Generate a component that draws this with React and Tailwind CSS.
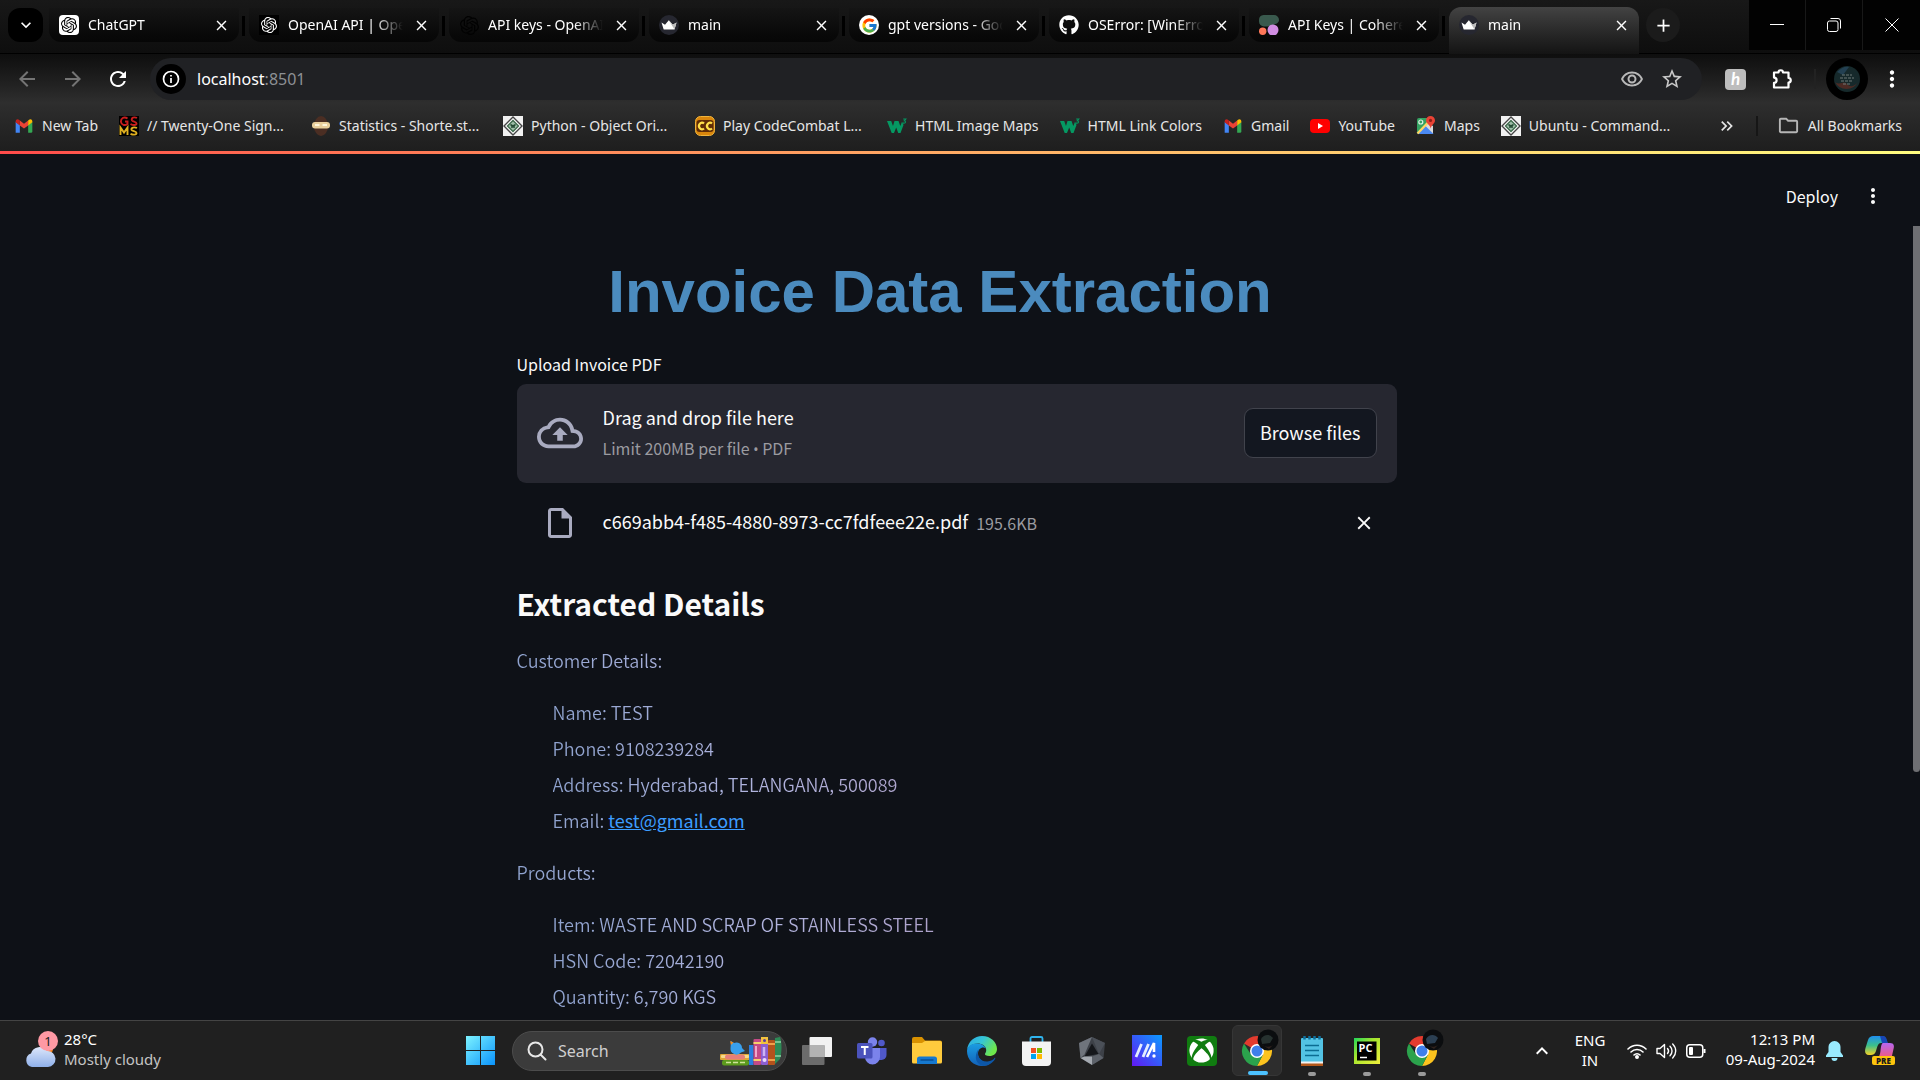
import React from 'react';
import { SiOpenai } from 'react-icons/si';
import { FaGithub, FaXbox } from 'react-icons/fa';
import { FcGoogle } from 'react-icons/fc';
import {
  MdOutlineCloudUpload,
  MdOutlineInsertDriveFile,
  MdStarBorder,
  MdOutlineFolder,
  MdMoreVert,
  MdClose,
  MdAdd,
  MdArrowBack,
  MdArrowForward,
  MdRefresh,
  MdKeyboardArrowDown,
  MdKeyboardArrowUp,
  MdKeyboardDoubleArrowRight,
  MdOutlineRemoveRedEye,
} from 'react-icons/md';

/* ---------- favicons ---------- */

const ChatGptIcon = () => (
  <span className="flex size-5 items-center justify-center rounded-sm bg-white text-black">
    <SiOpenai size={16} />
  </span>
);
const OpenAiDark = () => (
  <span className="flex size-5 items-center justify-center bg-black text-white">
    <SiOpenai size={16} />
  </span>
);
const OpenAiDim = () => (
  <span className="flex size-5 items-center justify-center text-[#020202]">
    <SiOpenai size={19} />
  </span>
);
const CrownIcon = () => (
  <svg viewBox="0 0 20 20" className="size-5">
    <circle cx="10" cy="10" r="10" fill="#262730" />
    <path d="M2.5 7.5 6 9.8 9.8 5.2 13.8 9.8 17.5 7.5 15.5 14.5H4.7Z" fill="#fff" />
    <path d="M9.8 5.2 13.8 9.8 17.5 7.5 15.5 14.5Z" fill="#bbb" />
  </svg>
);
const GoogleIcon = () => (
  <span className="flex size-5 items-center justify-center rounded-full bg-white">
    <FcGoogle size={17} />
  </span>
);
const GithubIcon = () => <FaGithub size={20} className="text-white" />;
const CohereIcon = () => (
  <svg viewBox="0 0 20 20" className="size-5">
    <path d="M4.500 0H15a5 5 0 0 1 5 5c0 3-3 3.800-5.500 4.800-2.500 1-4.500 1.700-8 1.700H5a5 5 0 0 1-5-5V5a5 5 0 0 1 4.500-5Z" fill="#39594d" />
    <circle cx="3.700" cy="16.200" r="3.700" fill="#ff7759" />
    <circle cx="14" cy="15" r="5.500" fill="#d18ee2" />
  </svg>
);

const GmailIcon = () => (
  <svg viewBox="0 0 24 24" className="size-5">
    <path d="M2 20V7l5 3.700V20H3.500A1.500 1.500 0 0 1 2 20Z" fill="#4285f4" />
    <path d="M17 20v-9.300L22 7v11.500a1.500 1.500 0 0 1-1.500 1.500Z" fill="#34a853" />
    <path d="M17 5.500 12 9.300 7 5.500v5.800l5 3.800 5-3.800Z" fill="#ea4335" />
    <path d="M2 6.500C2 4 4.700 3 6.300 4.900L7 5.500v5.800L2 7.500Z" fill="#c5221f" />
    <path d="M22 6.500C22 4 19.300 3 17.700 4.900L17 5.500v5.800l5-3.800Z" fill="#fbbc04" />
  </svg>
);
const MonogramIcon = () => (
  <svg viewBox="0 0 20 20" className="size-5">
    <rect width="20" height="20" fill="#000" />
    <path d="M8.500 2.500C5 0 1.500 2.500 2 6c.3 3 4 4 6.500 2V5.500H6M18 2c-3-1.500-6 0-5 2.300.7 1.500 4.500 1.200 4.500 3.200 0 2-3.500 2-6 .5" fill="none" stroke="#c81e1e" strokeWidth="1.900" />
    <path d="M1.500 19v-7.500l3.500 5 3.500-5V19M18 12c-3-1.300-6-.2-5.500 1.800.7 1.500 5 1.200 5 3.200 0 2-3.500 2-6 .8" fill="none" stroke="#e0b020" strokeWidth="1.900" />
  </svg>
);
const ShorteIcon = () => (
  <svg viewBox="0 0 20 20" className="size-5">
    <ellipse cx="10" cy="10" rx="7" ry="10" fill="#4b2e23" />
    <rect x="1" y="6" width="18" height="6.500" rx="3" fill="#e9cf9c" />
    <path d="M4 9h4.500M11.500 9H16" stroke="#fff6dc" strokeWidth="2" />
  </svg>
);
const DiamondIcon = () => (
  <svg viewBox="0 0 20 20" className="size-5">
    <rect width="20" height="20" fill="#f1f1f1" />
    <path d="M10 1 19 10 10 19 1 10Z" fill="#fff" stroke="#444" strokeWidth="1.400" />
    <path d="M10 4.500 15.500 10 10 15.500 4.500 10Z" fill="#9fbfa9" stroke="#3e6b4d" strokeWidth="1.400" />
    <path d="M7.500 8.500c1 1.500 4 1.500 5 0M8 11h4" stroke="#234a33" strokeWidth="1.400" fill="none" />
  </svg>
);
const CodeCombatIcon = () => (
  <svg viewBox="0 0 20 20" className="size-5">
    <rect x=".5" y=".5" width="19" height="19" rx="5" fill="#d9860c" stroke="#f0b43c" />
    <rect x="1.500" y="4" width="17" height="12" rx="3" fill="#5f2c07" />
    <path d="M9 7.500a3 3.300 0 1 0 0 5M17 7.500a3 3.300 0 1 0 0 5" fill="none" stroke="#ffe04a" strokeWidth="2.200" />
  </svg>
);
const W3Icon = () => (
  <svg viewBox="0 0 20 20" className="size-5">
    <path d="M0 5h4.200l1.800 5 1.500-5h4l1.800 5 1.700-4.200L16.500 9 13.500 17h-2.300L9.200 11.500 7 17H4.700Z" fill="#059862" />
    <path d="M16.200 3h2.600l-1.500 1.800c1.500 0 1.900 2.400-.4 2.400-.6 0-1-.3-1.200-.6" fill="none" stroke="#059862" strokeWidth="1.100" />
  </svg>
);
const YouTubeIcon = () => (
  <svg viewBox="0 0 20 20" className="size-5">
    <rect y="3" width="20" height="14" rx="4" fill="#f00" />
    <path d="M8 7v6l5-3Z" fill="#fff" />
  </svg>
);
const MapsIcon = () => (
  <svg viewBox="0 0 20 20" className="size-5">
    <path d="M1 4a2 2 0 0 1 2-2h12v16H3a2 2 0 0 1-2-2Z" fill="#34a261" />
    <path d="M1.500 17.500 9.500 9l8 8.500a2 2 0 0 1-1 .5H3a2 2 0 0 1-1.500-.5Z" fill="#4a89f3" />
    <path d="M12 7l5 3v7.500L9.500 10Z" fill="#dadbdd" />
    <path d="M1.500 17.500 12.500 6" stroke="#fdd663" strokeWidth="2.400" />
    <circle cx="4.800" cy="6" r="2" fill="none" stroke="#dff2e5" strokeWidth="1.200" />
    <path d="M14.500 0a4.500 4.500 0 0 1 4.500 4.500c0 3-3.600 4-4.300 8-.6-4-4.700-5-4.700-8A4.500 4.500 0 0 1 14.500 0Z" fill="#ea4335" />
    <circle cx="14.500" cy="4.400" r="1.600" fill="#8e1f17" />
  </svg>
);
const ExtensionIcon = () => (
  <svg viewBox="0 0 24 24" className="size-6" fill="none" stroke="#fff" strokeWidth="2.200" strokeLinejoin="round">
    <path d="M4 5.500h4.500a2 2 0 0 1 4.500 0h5.500v5.500a2 2 0 0 1 0 4.500v5H4v-4.700a2.600 2.600 0 0 0 0-5.200Z" />
  </svg>
);

/* ---------- browser chrome ---------- */

const TABS = [
  { title: 'ChatGPT', icon: ChatGptIcon },
  { title: 'OpenAI API | OpenAI', icon: OpenAiDark },
  { title: 'API keys - OpenAI API', icon: OpenAiDim },
  { title: 'main', icon: CrownIcon },
  { title: 'gpt versions - Google Search', icon: GoogleIcon },
  { title: 'OSError: [WinError 126]', icon: GithubIcon },
  { title: 'API Keys | Cohere', icon: CohereIcon },
  { title: 'main', icon: CrownIcon, active: true },
];

const BOOKMARKS = [
  { title: 'New Tab', icon: GmailIcon },
  { title: '// Twenty-One Sign...', icon: MonogramIcon, wide: true },
  { title: 'Statistics - Shorte.st...', icon: ShorteIcon, wide: true },
  { title: 'Python - Object Ori...', icon: DiamondIcon, wide: true },
  { title: 'Play CodeCombat L...', icon: CodeCombatIcon, wide: true },
  { title: 'HTML Image Maps', icon: W3Icon },
  { title: 'HTML Link Colors', icon: W3Icon },
  { title: 'Gmail', icon: GmailIcon },
  { title: 'YouTube', icon: YouTubeIcon },
  { title: 'Maps', icon: MapsIcon },
  { title: 'Ubuntu - Command...', icon: DiamondIcon, wide: true },
];

function Tab({ title, icon: Icon, active }) {
  return (
    <div className="flex w-[200px] min-w-0 shrink items-start pt-2">
      <div
        className={
          active
            ? '-mt-px flex h-[47px] min-w-0 flex-1 items-start rounded-t-xl bg-linear-to-b from-[#434343] to-[#141414] pt-px'
            : 'flex h-[34px] min-w-0 flex-1 items-start rounded-b-xl bg-linear-to-b from-[#151515] to-[#060606]'
        }
      >
        <button className="flex h-[34px] min-w-0 flex-1 items-center gap-[9px] pl-[10px] text-left">
          <span className="shrink-0"><Icon /></span>
          <span className="min-w-0 flex-1 overflow-hidden mask-r-from-75% mask-r-to-100% text-[14px] leading-5 whitespace-nowrap">
            {title}
          </span>
        </button>
        <button aria-label={'Close ' + title} className="mr-2 ml-2 flex h-[34px] w-5 shrink-0 items-center justify-center">
          <MdClose size={17} />
        </button>
      </div>
      <span className={active ? 'w-[10px] shrink-0' : 'mt-2 mr-1 ml-[3px] h-5 w-[3px] shrink-0 bg-black'} />
    </div>
  );
}

function TabStrip() {
  return (
    <div className="flex h-[54px] shrink-0 items-start border-b border-black bg-linear-to-b from-[#181818] to-[#0e0e0e] pl-2">
      <button aria-label="Search tabs" className="mt-2 mr-[6px] flex h-[34px] w-[35px] shrink-0 items-center justify-center rounded-xl bg-black">
        <MdKeyboardArrowDown size={20} />
      </button>
      {TABS.map((t, i) => <Tab key={i} {...t} />)}
      <button aria-label="New tab" className="mt-2 -ml-[3px] flex size-[34px] shrink-0 items-center justify-center rounded-full bg-[#1b1b1b]">
        <MdAdd size={21} />
      </button>
      <div className="ml-auto flex h-[50px] shrink-0 gap-px bg-[#181818]">
        <button aria-label="Minimize" className="flex w-14 items-center justify-center bg-[#020202]">
          <svg viewBox="0 0 14 14" className="size-[14px]"><path d="M0 6.500h14" stroke="#fff" /></svg>
        </button>
        <button aria-label="Restore" className="flex w-14 items-center justify-center bg-[#020202]">
          <svg viewBox="0 0 14 14" className="size-[14px]" fill="none" stroke="#fff">
            <rect x=".5" y="3" width="10.500" height="10.500" rx="2" />
            <path d="M3.500.5H11a2.500 2.500 0 0 1 2.500 2.500v7.500" />
          </svg>
        </button>
        <button aria-label="Close" className="flex w-[57px] items-center justify-center bg-[#020202]">
          <svg viewBox="0 0 14 14" className="size-[14px]"><path d="M.5.5l13 13M13.500.5l-13 13" stroke="#fff" /></svg>
        </button>
      </div>
    </div>
  );
}

function Toolbar() {
  return (
    <div className="flex h-[50px] items-center">
      <nav className="flex w-[150px] items-center justify-between pr-5 pl-[15px]">
        <button aria-label="Back" className="text-[#747474]"><MdArrowBack size={24} /></button>
        <button aria-label="Forward" className="text-[#747474]"><MdArrowForward size={24} /></button>
        <button aria-label="Reload"><MdRefresh size={24} /></button>
      </nav>
      <div className="flex h-[42px] flex-1 items-center rounded-full bg-[#202124] pr-[18px] pl-[6px]">
        <button aria-label="Site information" className="flex size-[30px] items-center justify-center rounded-full bg-black">
          <svg viewBox="0 0 18 18" className="size-[18px]" fill="none" stroke="#fff" strokeWidth="1.700">
            <circle cx="9" cy="9" r="7.500" />
            <path d="M9 8v5M9 5v1.600" />
          </svg>
        </button>
        <p className="flex-1 pl-[11px] text-[16px] leading-6">localhost<span className="text-[#8d9094]">:8501</span></p>
        <button aria-label="Show" className="mr-4 text-[#b9b9b9]"><MdOutlineRemoveRedEye size={24} /></button>
        <button aria-label="Bookmark this tab" className="text-[#c8c8c8]"><MdStarBorder size={24} /></button>
      </div>
      <div className="flex w-[218px] items-center pl-[23px]">
        <button aria-label="Coupons" className="flex h-[21px] w-[21px] items-center justify-center rounded-sm bg-[#bdbdbd] font-['Lato',sans-serif] text-[17px] leading-5 font-bold text-white italic">h</button>
        <button aria-label="Extensions" className="ml-6"><ExtensionIcon /></button>
        <span className="ml-5 h-5 w-[2px] bg-[#222]" />
        <button aria-label="Profile" className="ml-[10px] flex size-[42px] items-center justify-center rounded-full bg-black">
          <svg viewBox="0 0 26 26" className="size-[26px]">
            <circle cx="13" cy="13" r="13" fill="#16292b" />
            <path d="M1 16c5 4 8-2 12 2s8 2 11-2a13 13 0 0 1-23 0Z" fill="#4c2a24" />
            <path d="M3 6c4-4 8-6 12-5l-6 8Z" fill="#234052" />
            <path d="M8 9h10M6 12h14M7 15h12M9 18h8" stroke="#6f7a78" strokeWidth="1" strokeDasharray="3 1" />
          </svg>
        </button>
        <button aria-label="Menu" className="ml-[11px]"><MdMoreVert size={26} /></button>
      </div>
    </div>
  );
}

function BookmarkBar() {
  return (
    <div className="flex h-[47px] items-center pr-[18px] pb-1 pl-[14px] text-[14px] leading-5 text-[#e6e6e6]">
      {BOOKMARKS.map(({ title, icon: Icon, wide }, i) => (
        <a key={i} href="#" className={(wide ? 'w-48 ' : '') + 'flex shrink-0 items-center gap-2 pr-[21px] whitespace-nowrap'}>
          <Icon />
          {title}
        </a>
      ))}
      <button aria-label="More bookmarks" className="ml-auto"><MdKeyboardDoubleArrowRight size={20} /></button>
      <span className="mx-[19px] h-5 w-[2px] bg-[#161616]" />
      <button className="flex items-center gap-2 whitespace-nowrap">
        <MdOutlineFolder size={23} className="text-[#b5b5b5]" />
        All Bookmarks
      </button>
    </div>
  );
}

/* ---------- page ---------- */

const SECTIONS = [
  {
    heading: 'Customer Details:',
    items: [
      ['Name', 'TEST'],
      ['Phone', '9108239284'],
      ['Address', 'Hyderabad, TELANGANA, 500089'],
      ['Email', 'test@gmail.com', 'mailto:test@gmail.com'],
    ],
  },
  {
    heading: 'Products:',
    items: [
      ['Item', 'WASTE AND SCRAP OF STAINLESS STEEL'],
      ['HSN Code', '72042190'],
      ['Quantity', '6,790 KGS'],
    ],
  },
];

function Tinted({ children }) {
  return (
    <span className="bg-linear-to-r from-[#8fa3cf] via-[#b0b4de] to-[#ada0c8] bg-[length:400px_100%] bg-clip-text text-transparent">
      {children}
    </span>
  );
}

function InvoicePage() {
  return (
    <main className="flex min-h-0 flex-1 overflow-hidden bg-[#0e1117] font-['Noto_Sans_CJK_SC',sans-serif] text-[#fafafa]">
      <div className="min-w-0 flex-1">
        <header className="flex h-[67px] items-center justify-end pt-4 pr-[28px] text-[16px] leading-6">
          <button>Deploy</button>
          <button aria-label="Main menu" className="ml-[23px]"><MdMoreVert size={24} /></button>
        </header>
        <div className="mx-auto w-full max-w-[880px]">
          <h1 className="pt-[35px] pr-[33px] text-center font-['Liberation_Sans',sans-serif] text-[60px] leading-[72px] font-bold text-[#4b8bbe]">
            Invoice Data Extraction
          </h1>
          <label htmlFor="pdf" className="mt-6 block text-[16px] leading-6">Upload Invoice PDF</label>
          <section className="mt-2 flex h-[99px] items-center rounded-[9px] bg-[#262730] px-5 pb-px">
            <MdOutlineCloudUpload size={46} className="text-[#a9abc0]" />
            <div className="ml-5 flex-1">
              <p className="text-[18px] leading-7">Drag and drop file here</p>
              <p className="mt-[3px] text-[16px] leading-7 text-[#9b9ba0]">
                Limit 200MB per file <span className="font-['Noto_Sans',sans-serif] text-[14px]">•</span> PDF
              </p>
            </div>
            <button id="pdf" className="h-[50px] rounded-[9px] border border-[#41434c] bg-[#131720] px-[15px] pb-[2px] text-[18px] leading-7">Browse files</button>
          </section>
          <div className="flex items-center px-5 pt-[22px]">
            <span className="flex w-[46px] justify-center"><MdOutlineInsertDriveFile size={36} className="text-[#a9abc0]" /></span>
            <p className="ml-5 pb-1 text-[18px] leading-8">c669abb4-f485-4880-8973-cc7fdfeee22e.pdf</p>
            <small className="ml-2 pb-px text-[16px] leading-8 text-[#9b9ba0]">195.6KB</small>
            <button aria-label="Remove file" className="mr-[2px] ml-auto"><MdClose size={22} /></button>
          </div>
          <h2 className="mt-11 text-[30px] leading-9 font-bold">Extracted Details</h2>
          <div className="mt-[25px] flex flex-col gap-[23px] text-[18px] leading-[29px] font-[350]">
            {SECTIONS.map((s) => (
              <section key={s.heading}>
                <h3><Tinted>{s.heading}</Tinted></h3>
                <ul className="mt-[23px] flex flex-col gap-[7px] pl-9">
                  {s.items.map(([key, value, href]) => (
                    <li key={key}>
                      <Tinted>{key}: {href ? null : value}</Tinted>
                      {href && <a href={href} className="font-normal text-[#3d9dff] underline">{value}</a>}
                    </li>
                  ))}
                </ul>
              </section>
            ))}
          </div>
        </div>
      </div>
      <div className="w-[7px] shrink-0 pt-[72px]">
        <div className="h-[546px] rounded-b-sm bg-[#6e6f73]" />
      </div>
    </main>
  );
}

/* ---------- taskbar ---------- */

const WindowsIcon = () => (
  <svg viewBox="0 0 29 29" className="size-[29px]">
    <defs><linearGradient id="win" x1="0" y1="0" x2="1" y2="1"><stop offset="0" stopColor="#7df3ff" /><stop offset="1" stopColor="#0a93fb" /></linearGradient></defs>
    <path d="M0 0h14v14H0ZM15 0h14v14H15ZM0 15h14v14H0ZM15 15h14v14H15Z" fill="url(#win)" />
  </svg>
);
const BooksArt = () => (
  <svg viewBox="0 0 62 30" className="h-[30px] w-[62px]">
    <rect x="0" y="18" width="30" height="6" rx="1" fill="#e0a636" />
    <rect x="1" y="19" width="28" height="3" rx="1" fill="#f7d98a" />
    <rect x="5" y="18.500" width="20" height="5" rx="2.500" fill="#e77f7a" />
    <rect x="2" y="24" width="27" height="5.500" rx="2" fill="#5c9a1d" />
    <path d="M6 26.500h20" stroke="#cfe39a" strokeWidth="1.500" strokeDasharray="5 2" />
    <path d="M11 5l3 2a5.500 5.500 0 0 1 8 5l3 3-4 1.500a6 6 0 0 1-10.500-4.500Z" fill="#3aa0ee" />
    <path d="M10 5l3.500 1.500L11 9Z" fill="#f08a24" />
    <rect x="29" y="9" width="4.500" height="20" fill="#2b7de0" />
    <rect x="33.500" y="3" width="7.500" height="26" rx="1" fill="#c44a86" />
    <path d="M33.500 7h7.500M33.500 24h7.500" stroke="#f5d06a" strokeWidth="2" />
    <path d="M36 10v11" stroke="#f0a8cb" strokeWidth="2" />
    <rect x="41" y="1" width="7" height="28" rx="1" fill="#8b5fd0" />
    <rect x="41" y="1" width="7" height="7" fill="#f2c23e" />
    <circle cx="44.500" cy="4.500" r="1.500" fill="#5d3b9c" /><path d="M44 11v9" stroke="#cdb4f5" strokeWidth="2.500" /><circle cx="44.500" cy="24" r="2" fill="#e9d9ff" />
    <rect x="48" y="4" width="7" height="25" rx="1" fill="#b4531c" />
    <path d="M48 8h7M48 24h7" stroke="#f0a04a" strokeWidth="2" />
    <path d="M55 2l5-1c2 6 2 14 0 22l-5 5Z" fill="#2d8a56" />
    <path d="M55 6h6M55 20h6" stroke="#8fd3a4" strokeWidth="1.500" />
  </svg>
);
const TaskViewIcon = () => (
  <svg viewBox="0 0 30 28" className="h-7 w-[30px]">
    <rect x="7.500" y="0" width="22.500" height="20" rx="1" fill="#f2f2f2" />
    <rect x="0" y="8" width="22.500" height="20" rx="1" fill="#6c6c6c" />
    <path d="M7.500 8h15v12h-15Z" fill="#b3b3b3" />
  </svg>
);
const TeamsIcon = () => (
  <svg viewBox="0 0 30 28" className="h-7 w-[30px]">
    <circle cx="24.500" cy="6" r="3.300" fill="#5059c9" />
    <path d="M20 11h9.500v7a5 5 0 0 1-5 5H21Z" fill="#5059c9" />
    <circle cx="15.500" cy="5" r="4.700" fill="#7b83eb" />
    <path d="M8 11h15v9a7.500 7.500 0 0 1-15 0Z" fill="#7b83eb" />
    <rect x="0" y="6" width="15.500" height="15.500" rx="1.500" fill="#4b53bc" />
    <path d="M4 10h7.500M7.750 10v8" stroke="#fff" strokeWidth="2" />
  </svg>
);
const FolderIcon = () => (
  <svg viewBox="0 0 30 27" className="h-[27px] w-[30px]">
    <path d="M0 2a2 2 0 0 1 2-2h8l3 3.500h15a2 2 0 0 1 2 2V10H0Z" fill="#d99100" />
    <path d="M0 6h10l3-2h15a2 2 0 0 1 2 2v19a1.500 1.500 0 0 1-1.500 1.500h-27A1.500 1.500 0 0 1 0 25Z" fill="#ffcb3d" />
    <path d="M5 27v-5a2.500 2.500 0 0 1 2.500-2.500h15A2.500 2.500 0 0 1 25 22v5Z" fill="#1679d0" />
    <path d="M8.500 23h13" stroke="#0a4f94" strokeWidth="1.500" />
  </svg>
);
const EdgeIcon = () => (
  <svg viewBox="0 0 30 30" className="size-[30px]">
    <defs>
      <linearGradient id="eg1" x1="0" y1="0" x2="1" y2=".5"><stop offset="0" stopColor="#2aa8e6" /><stop offset=".5" stopColor="#35c5d6" /><stop offset="1" stopColor="#6fe84b" /></linearGradient>
      <linearGradient id="eg2" x1="0" y1="0" x2="0" y2="1"><stop offset="0" stopColor="#1b9de2" /><stop offset="1" stopColor="#1261b8" /></linearGradient>
    </defs>
    <path d="M0 14C1 5.500 7.500 0 15 0c9 0 15 6.500 15 13 0 4.500-3.500 7-7.500 7-3.500 0-5-1.300-4.500-2.300.7-1 1.200-2 1.200-3.700C19.200 10 15 7.500 10.500 7.500 5 7.500 1 11 0 14Z" fill="url(#eg1)" />
    <path d="M0 15c0-5 5-8 10.500-7.500 4.500.3 7.500 2.500 8.500 5-3-2.500-8 0-8 5 0 6 6 10.500 13 9-2.500 2.500-5.500 3.500-9 3.500C6.500 30 0 23.500 0 15Z" fill="url(#eg2)" />
    <path d="M11.500 13c-2.500 6 1.500 13 9 12.500 3.500-.2 6-2 7-3.500.8-.5 1 .2.7.8C25.500 27.500 21 30 16.500 30 9.500 29 6 21 11.500 13Z" fill="#0d57a8" />
  </svg>
);
const StoreIcon = () => (
  <svg viewBox="0 0 29 30" className="h-[30px] w-[29px]">
    <path d="M8.500 6V2.500A1.500 1.500 0 0 1 10 1h9a1.500 1.500 0 0 1 1.500 1.500V6" fill="none" stroke="#2fb4ee" strokeWidth="1.800" />
    <path d="M0 5.500h29V26a4 4 0 0 1-4 4H4a4 4 0 0 1-4-4Z" fill="#f3f3f3" />
    <path d="M9 12h5v5H9Z" fill="#f25022" /><path d="M15 12h5v5h-5Z" fill="#7fba00" />
    <path d="M9 18h5v5H9Z" fill="#00a4ef" /><path d="M15 18h5v5h-5Z" fill="#ffb900" />
  </svg>
);
const ArmouryIcon = () => (
  <svg viewBox="0 0 26 28" className="h-7 w-[26px]">
    <path d="M13 0 26 6 24.500 21 13 28 1.500 21 0 6Z" fill="#3d4148" />
    <path d="M13 0 0 6 1.500 21 5.500 17.500Z" fill="#6f747c" />
    <path d="M13 0 26 6 20 17Z" fill="#4b5058" />
    <path d="M13 6.500 19.500 17 5.500 19.500Z" fill="#15171b" />
    <path d="M1.500 21 5.500 19.500 13 19.500V28Z" fill="#a4a9b0" />
    <path d="M13 19.500 20 17 24.500 21 13 28Z" fill="#5d626a" />
  </svg>
);
const MyAsusIcon = () => (
  <svg viewBox="0 0 30 31" className="h-[31px] w-[30px]">
    <defs><linearGradient id="asus" x1="0" y1="1" x2="1" y2="0"><stop offset="0" stopColor="#6218f2" /><stop offset="1" stopColor="#0a9bff" /></linearGradient></defs>
    <path d="M0 0h30v31H0Z" fill="url(#asus)" />
    <path d="M4 22 9.500 9M11 22 16.500 9" stroke="#e3ecff" strokeWidth="2.800" />
    <path d="M15 22 22 8v9" stroke="#fff" strokeWidth="2.600" fill="none" />
    <circle cx="22" cy="21" r="1.700" fill="#fff" />
  </svg>
);
const XboxIcon = () => (
  <span className="flex size-[30px] items-center justify-center rounded-sm bg-[#107c10]">
    <FaXbox size={25} className="text-white" />
  </span>
);
const ChromeIcon = ({ tint }) => (
  <svg viewBox="0 0 38 38" className="size-[38px]">
    <g transform="translate(1 7)">
      <path d="M15 15 2 7.500A15 15 0 0 1 28 7.500Z" fill="#e33b2e" />
      <path d="M15 8h13.300A15 15 0 0 1 15 30l6-11.500Z" fill="#fcc31e" />
      <path d="M9 18.500 2 7.500A15 15 0 0 0 15 30l6-11.500Z" fill="#2ba24c" />
      <circle cx="15" cy="15" r="7" fill="#fff" />
      <circle cx="15" cy="15" r="5.500" fill="#3f7fea" />
    </g>
    <circle cx="27" cy="11" r="10.500" fill="#0b0d0f" />
    <path d="M20 10c3-5 9-5 12-1l-3 5-8 1Z" fill={tint} />
    <path d="M20 15c3 3 8 4 12 1l-4 4Z" fill="#30221c" />
  </svg>
);
const NotepadIcon = () => (
  <svg viewBox="0 0 22 30" className="h-[30px] w-[22px]">
    <rect x="0" y="25" width="22" height="5" fill="#b3581b" />
    <rect x="0" y="2" width="22" height="25" rx="1" fill="#53c3e4" />
    <path d="M0 26.500h22" stroke="#f3f3f3" strokeWidth="2" />
    <path d="M3.500 0v3.500M8.500 0v3.500M13.500 0v3.500M18.500 0v3.500" stroke="#0d6f9c" strokeWidth="2.500" />
    <path d="M4 9.500h14M4 14.500h14M4 19.500h14" stroke="#0b6c92" strokeWidth="1.600" />
  </svg>
);
const PyCharmIcon = () => (
  <svg viewBox="0 0 26 26" className="size-[26px]">
    <defs><linearGradient id="pyc" x1="0" y1="0" x2="1" y2="1"><stop offset="0" stopColor="#21d75a" /><stop offset=".4" stopColor="#a5e52e" /><stop offset="1" stopColor="#f2f03c" /></linearGradient></defs>
    <rect width="26" height="26" fill="url(#pyc)" />
    <rect x="3" y="3.500" width="19.500" height="19" fill="#000" />
    <text x="4.500" y="14" fontSize="11" fontWeight="700" fontFamily="Open Sans, sans-serif" fill="#fff">PC</text>
    <path d="M6 19.500h7" stroke="#fff" strokeWidth="1.500" />
  </svg>
);
const CopilotIcon = () => (
  <svg viewBox="0 0 30 29" className="h-[29px] w-[30px]">
    <defs>
      <linearGradient id="cp1" x1="0" y1="0" x2="0" y2="1"><stop offset="0" stopColor="#1f8ff0" /><stop offset=".5" stopColor="#3cc08b" /><stop offset="1" stopColor="#f4d126" /></linearGradient>
      <linearGradient id="cp2" x1="0" y1="0" x2="0" y2="1"><stop offset="0" stopColor="#b667f0" /><stop offset="1" stopColor="#f2597c" /></linearGradient>
    </defs>
    <path d="M8 0h9c3 0 4 2 5 7h-6c-3 0-3.500 3-5 8-1 3-3 4-5 4H4c-4 0-4.500-3-3.500-7L3 4c1-3 3-4 5-4Z" fill="url(#cp1)" />
    <path d="M15 0h3c3 0 3.500 2.500 5 7h-6Z" fill="#1747b5" />
    <path d="M18 7h7c4 0 4.500 3 3.500 6l-2 9H12c2-1 3-3 3.500-7C16 9 17 7 18 7Z" fill="url(#cp2)" />
    <rect x="7" y="20" width="23" height="9" rx="2" fill="#fdc40d" />
    <text x="18.500" y="27.600" textAnchor="middle" fontSize="8" fontWeight="800" fontFamily="Open Sans, sans-serif" fill="#1b1b1b">PRE</text>
  </svg>
);

const APPS = [
  { name: 'Task view', icon: <TaskViewIcon /> },
  { name: 'Teams', icon: <TeamsIcon /> },
  { name: 'File Explorer', icon: <FolderIcon /> },
  { name: 'Edge', icon: <EdgeIcon /> },
  { name: 'Microsoft Store', icon: <StoreIcon /> },
  { name: 'Armoury Crate', icon: <ArmouryIcon /> },
  { name: 'MyASUS', icon: <MyAsusIcon /> },
  { name: 'Xbox', icon: <XboxIcon /> },
  { name: 'Chrome', icon: <ChromeIcon tint="#26312f" />, state: 'active', badge: true },
  { name: 'Notepad', icon: <NotepadIcon />, state: 'open' },
  { name: 'PyCharm', icon: <PyCharmIcon />, state: 'open' },
  { name: 'Chrome profile', icon: <ChromeIcon tint="#2b3f52" />, state: 'open', badge: true },
];

function AppButton({ name, icon, state, badge }) {
  return (
    <button aria-label={name} className="flex w-[55px] justify-center">
      <span
        className={
          'relative flex h-[51px] w-[50px] items-center justify-center rounded-md ' +
          (state === 'active' ? 'border border-[#363636] bg-[#2d2d2d] ' : '') +
          (badge ? 'pb-[6px] pl-[6px]' : '')
        }
      >
        {icon}
        {state === 'active' && <span className="absolute bottom-0 left-[15px] h-1 w-5 rounded-full bg-[#4cc2ff]" />}
        {state === 'open' && <span className="absolute bottom-0 left-[21px] h-1 w-2 rounded-full bg-[#9a9a9a]" />}
      </span>
    </button>
  );
}

function Taskbar() {
  return (
    <footer className="grid h-[60px] shrink-0 grid-cols-[1fr_auto_1fr] items-center border-t border-[#444] bg-[#202020] text-[15px] leading-5">
      <button className="flex items-center gap-[6px] pb-1 pl-6 text-left">
        <svg viewBox="0 0 34 36" className="h-9 w-[34px]">
          <defs><linearGradient id="cl" x1="0" y1="0" x2="0" y2="1"><stop offset="0" stopColor="#dce6fa" /><stop offset="1" stopColor="#8fb0ea" /></linearGradient></defs>
          <circle cx="23" cy="18" r="6" fill="#f2841f" />
          <path d="M8 36a7 7 0 0 1-1-13.500A9 9 0 0 1 23 20a8 8 0 0 1 1 16Z" fill="url(#cl)" />
          <circle cx="24" cy="10" r="10" fill="#ff99a4" />
          <text x="24" y="15" textAnchor="middle" fontSize="13" fontFamily="Noto Sans, sans-serif" fill="#1b1b1b">1</text>
        </svg>
        <span className="flex flex-col">
          <span>28°C</span>
          <span className="text-[#c4c4c4]">Mostly cloudy</span>
        </span>
      </button>
      <div className="mr-4 flex items-center">
        <button aria-label="Start" className="flex w-[55px] justify-center pr-1"><WindowsIcon /></button>
        <label className="mx-[2px] flex h-10 w-[275px] items-center rounded-full border border-[#4c4c4c] bg-[#3b3b3b] pr-1 pl-[14px]">
          <svg viewBox="0 0 20 20" className="size-5 shrink-0" fill="none" stroke="#e8e8e8" strokeWidth="2">
            <circle cx="8.500" cy="8.500" r="7" /><path d="M13.500 13.500 18.500 18.500" strokeLinecap="round" />
          </svg>
          <input type="text" aria-label="Search" placeholder="Search" className="ml-[11px] w-0 min-w-0 flex-1 bg-transparent text-[16px] leading-6 outline-none placeholder:text-[#cfcfcf]" />
          <BooksArt />
        </label>
        {APPS.map((a) => <AppButton key={a.name} {...a} />)}
      </div>
      <div className="flex items-center justify-end pr-[25px]">
        <button aria-label="Show hidden icons"><MdKeyboardArrowUp size={24} /></button>
        <button className="ml-[18px] w-[36px] pb-[2px] text-center">ENG<br />IN</button>
        <button aria-label="Network, sound, battery" className="ml-[19px] flex items-center gap-[9px]">
          <svg viewBox="0 0 20 16" className="h-4 w-5" fill="none" stroke="#fff" strokeWidth="1.600" strokeLinecap="round">
            <path d="M1 6a12.700 12.700 0 0 1 18 0M4 9a8.500 8.500 0 0 1 12 0M7 12a4.200 4.200 0 0 1 6 0" /><circle cx="10" cy="14" r="1.200" fill="#fff" />
          </svg>
          <svg viewBox="0 0 21 18" className="h-[18px] w-[21px]" fill="none" stroke="#fff" strokeWidth="1.400" strokeLinecap="round" strokeLinejoin="round">
            <path d="M1 6.500h3L8.500 2.500v13L4 11.500H1ZM11.500 6.500c1.300 1.500 1.300 3.500 0 5M14 4.300c2.700 2.700 2.700 6.700 0 9.400M16.700 2c4 4 4 10 0 14" />
          </svg>
          <svg viewBox="0 0 20 14" className="h-[14px] w-5" fill="none" stroke="#fff" strokeWidth="1.500">
            <rect x=".75" y=".75" width="16" height="12.500" rx="3" /><path d="M18.500 5v4" strokeWidth="2" /><rect x="3" y="3" width="4" height="8" rx="1" fill="#fff" stroke="none" />
          </svg>
        </button>
        <button className="ml-4 w-[93px] pb-1 text-right whitespace-nowrap">12:13 PM<br />09-Aug-2024</button>
        <button aria-label="Notifications" className="ml-[11px]">
          <svg viewBox="0 0 17 20" className="h-5 w-[17px]" fill="#99ebff">
            <path d="M8.500 0A6 6 0 0 1 14.500 6.500V11l2.500 3.500V16H0v-1.500L2.500 11V6.500A6 6 0 0 1 8.500 0ZM5.500 17h6a3 3 0 0 1-6 0Z" />
          </svg>
        </button>
        <button aria-label="Copilot" className="ml-[22px]"><CopilotIcon /></button>
      </div>
    </footer>
  );
}

export default function App() {
  return (
    <div className="flex h-screen flex-col overflow-hidden bg-[#0e1117] font-['Noto_Sans',sans-serif] text-white">
      <TabStrip />
      <div className="shrink-0 bg-linear-to-b from-[#0e0e0e] via-[#2e2e2e] via-50% to-[#1e1e1e]">
        <Toolbar />
        <BookmarkBar />
      </div>
      <div className="h-[3px] shrink-0 bg-linear-to-r from-[#ff4b4b] to-[#fffd80]" />
      <InvoicePage />
      <Taskbar />
    </div>
  );
}
